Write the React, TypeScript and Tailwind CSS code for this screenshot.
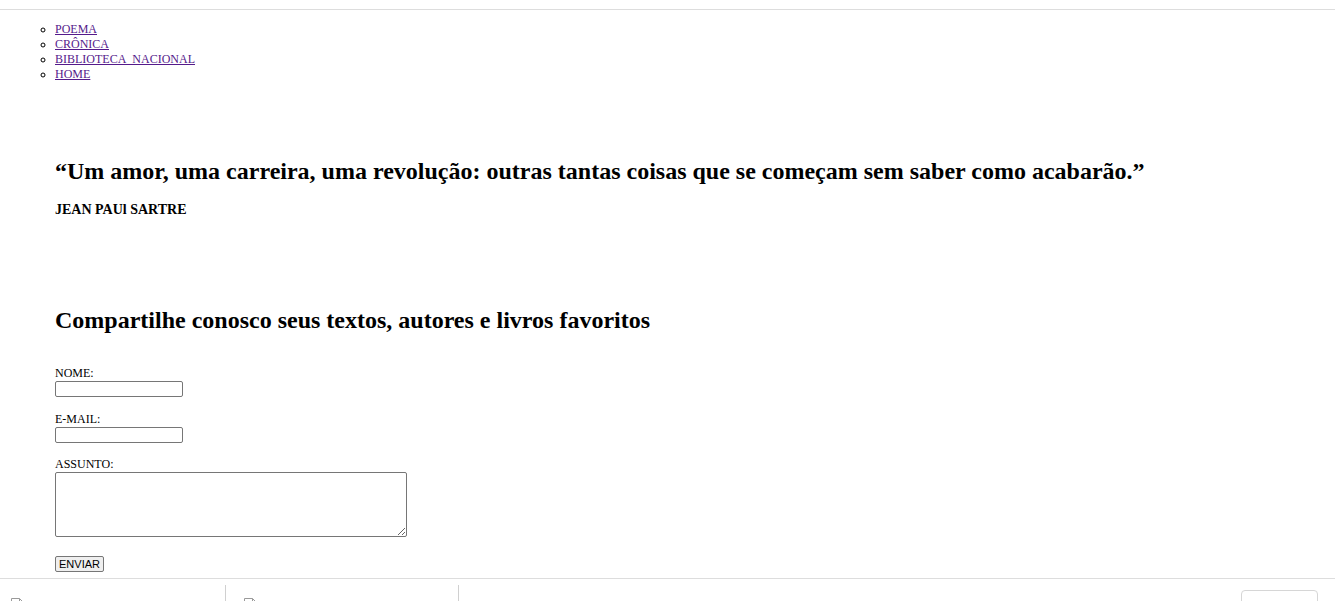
import React from "react";

const serif = { fontFamily: '"Liberation Serif", "Times New Roman", serif' };

function FileIcon() {
  return (
    <svg width="13" height="16" viewBox="0 0 13 16" className="block">
      <path d="M0.5 0.5 H8.5 L12.5 4.5 V15.5 H0.5 Z" fill="#fff" stroke="#9a9a9a" strokeWidth="1" />
      <path d="M8.5 0.5 V4.5 H12.5" fill="none" stroke="#9a9a9a" strokeWidth="1" />
    </svg>
  );
}

export default function App() {
  const links = ["POEMA", "CRÔNICA", "BIBLIOTECA_NACIONAL", "HOME"];
  return (
    <div className="relative h-[601px] w-full overflow-hidden bg-white text-black" style={serif}>
      <div className="h-[9px]" />
      <div className="border-t border-[#dddddd]" />
      <nav className="mt-[12px] pl-[55px]">
        <ul className="list-[circle] text-[12px] leading-[15px]">
          {links.map((l) => (
            <li key={l}>
              <a href="#" className="text-[#551a8b] underline">
                {l}
              </a>
            </li>
          ))}
        </ul>
      </nav>
      <div className="pl-[55px]">
        <h1 className="mt-[75px] text-[24px] font-bold leading-[28px]">
          “Um amor, uma carreira, uma revolução: outras tantas coisas que se começam sem saber como acabarão.”
        </h1>
        <p className="mt-[17px] text-[14px] font-bold leading-[15px]">JEAN PAUl SARTRE</p>
        <h2 className="mt-[89px] text-[24px] font-bold leading-[28px]">
          Compartilhe conosco seus textos, autores e livros favoritos
        </h2>
        <form className="mt-[32px] flex flex-col items-start text-[12px] leading-[15px]" onSubmit={(e) => e.preventDefault()}>
          <label>NOME:</label>
          <input type="text" className="h-[16px] w-[128px] rounded-[2px] border border-[#767676] bg-white" />
          <label className="mt-[15px]">E-MAIL:</label>
          <input type="email" className="h-[16px] w-[128px] rounded-[2px] border border-[#767676] bg-white" />
          <label className="mt-[14px]">ASSUNTO:</label>
          <textarea className="h-[65px] w-[352px] rounded-[2px] border border-[#767676] bg-white" />
          <button
            type="submit"
            className="mt-[19px] h-[16px] w-[49px] rounded-[2px] border border-[#767676] bg-[#efefef] text-[11px] leading-[14px] text-black"
            style={{ fontFamily: '"Liberation Sans", Arial, sans-serif' }}
          >
            ENVIAR
          </button>
        </form>
      </div>
      <div className="absolute bottom-0 left-0 right-0 h-[23px] border-t border-[#dddddd] bg-white">
        <div className="flex h-full">
          <div className="w-[225px] pl-[11px] pt-[19px]">
            <FileIcon />
          </div>
          <div className="mt-[6px] w-px bg-[#d0d0d0]" />
          <div className="w-[232px] pl-[18px] pt-[19px]">
            <FileIcon />
          </div>
          <div className="mt-[6px] w-px bg-[#d0d0d0]" />
          <div className="flex-1" />
          <div className="mr-[17px] mt-[11px] h-[20px] w-[77px] rounded-t-[4px] border border-[#d6d6d6]" />
        </div>
      </div>
    </div>
  );
}
